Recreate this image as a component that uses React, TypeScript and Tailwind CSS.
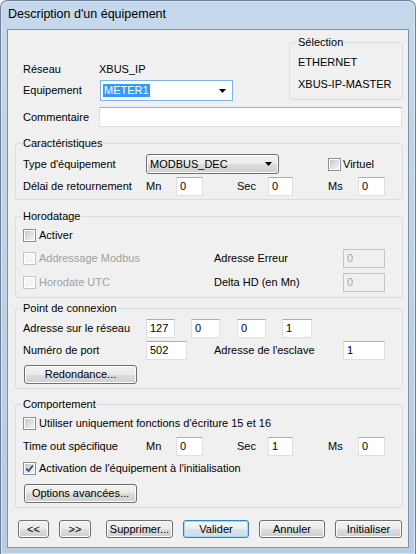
import React from 'react';

type Kids = { children?: React.ReactNode; className?: string };

const Check = ({ checked = false, disabled = false }: { checked?: boolean; disabled?: boolean }) => (
  <span
    className={`flex h-[13px] w-[13px] shrink-0 items-center justify-center border bg-white ${
      disabled ? 'border-[#c6c6c6]' : 'border-[#8e8f8f]'
    }`}
  >
    <span
      className={`flex h-[9px] w-[9px] items-center justify-center ${
        disabled ? 'bg-[#f4f4f4]' : 'bg-[linear-gradient(135deg,#c4c8ce,#f4f5f6)]'
      }`}
    >
      {checked && (
        <svg width="9" height="9" viewBox="0 0 9 9">
          <path d="M1.3 4.6 L3.6 7 L7.8 1.4" fill="none" stroke="#26449a" strokeWidth="1.7" />
        </svg>
      )}
    </span>
  </span>
);

const Field = ({ value = '', className = '', disabled = false }: { value?: string; className?: string; disabled?: boolean }) => (
  <div
    className={`flex h-[19px] shrink-0 items-center border pl-[3px] ${
      disabled ? 'border-[#c5c5c5] bg-[#f0f0f0] text-[#a3a3a3]' : 'border-[#dbdfe6] border-t-[#abadb3] bg-white'
    } ${className}`}
  >
    {value}
  </div>
);

const Btn = ({ children, className = '', focused = false }: Kids & { focused?: boolean }) => (
  <div
    className={`flex shrink-0 items-center justify-center rounded-[3px] border ${
      focused
        ? 'border-[#3c7fb1] bg-[linear-gradient(#f5f9fc_0%,#e9eef2_50%,#dde3e8_50%,#d3dbe1_100%)] shadow-[inset_0_0_0_1px_#9ed9f8]'
        : 'border-[#707070] bg-[linear-gradient(#f2f2f2_0%,#ebebeb_50%,#dddddd_50%,#cfcfcf_100%)] shadow-[inset_0_0_0_1px_#fcfcfc]'
    } ${className}`}
  >
    {children}
  </div>
);

const Arrow = () => (
  <svg width="7" height="4" viewBox="0 0 7 4" className="shrink-0">
    <path d="M0 0 H7 L3.5 4 Z" fill="#000" />
  </svg>
);

const Group = ({ title, children, className = '' }: Kids & { title: string }) => (
  <fieldset className={`rounded-[3px] border border-[#d5dfe5] px-[7px] ${className}`}>
    <legend className="-ml-[1px] px-[1px] leading-[13px]">{title}</legend>
    {children}
  </fieldset>
);

const TimeRow = ({ label, mn, sec, ms, className = '' }: { label: string; mn: string; sec: string; ms: string; className?: string }) => (
  <div className={`flex h-[19px] items-center ${className}`}>
    <span className="w-[123px] shrink-0">{label}</span>
    <span className="w-[30px] shrink-0">Mn</span>
    <Field value={mn} className="w-[27px]" />
    <span className="ml-[34px] w-[31px] shrink-0">Sec</span>
    <Field value={sec} className="w-[25px]" />
    <span className="ml-[35px] w-[30px] shrink-0">Ms</span>
    <Field value={ms} className="w-[27px]" />
  </div>
);

const CheckRow = ({ label, checked, disabled }: { label: string; checked?: boolean; disabled?: boolean }) => (
  <div className="flex items-center">
    <Check checked={checked} disabled={disabled} />
    <span className={`ml-[3px] whitespace-nowrap ${disabled ? 'text-[#a0a0a0]' : ''}`}>{label}</span>
  </div>
);

export default function App() {
  return (
    <div className="h-[554px] w-[419px] overflow-hidden bg-white font-['Liberation_Sans',Arial,sans-serif] text-[11px] leading-[13px] text-black">
      <div className="flex h-[554px] w-[416px] flex-col rounded-t-[7px] border border-b-0 border-[#6f8196] bg-[linear-gradient(#c6d8eb,#b8cce2)] shadow-[inset_0_0_0_1px_#d8e4f0]">
        {/* title bar */}
        <div className="flex h-[28px] shrink-0 items-center pb-[1px] pl-[7px] text-[12.5px] text-black">
          Description d'un équipement
        </div>

        {/* client area */}
        <div className="mx-[6px] flex h-[519px] shrink-0 flex-col border border-[#7f91a5] bg-[#f0f0f0]">
          {/* top */}
          <div className="mt-[6px] flex h-[65px] pl-[15px] pr-[5px]">
            <div className="flex flex-1 flex-col">
              <div className="mt-[26px] flex h-[14px] items-center">
                <span className="w-[76px]">Réseau</span>
                <span>XBUS_IP</span>
              </div>
              <div className="mt-[4px] flex h-[21px] items-center">
                <span className="w-[77px]">Equipement</span>
                <div className="flex h-[21px] w-[133px] items-center border border-[#7eb4ea] bg-white pl-[2px] pr-[6px]">
                  <span className="bg-[#3399ff] px-[1px] text-white">METER1</span>
                  <span className="flex-1" />
                  <Arrow />
                </div>
              </div>
            </div>
            <Group title="Sélection" className="h-[64px] w-[114px] pl-[8px]">
              <div className="mt-[7px] h-[14px]">ETHERNET</div>
              <div className="mt-[8px] h-[14px] whitespace-nowrap">XBUS-IP-MASTER</div>
            </Group>
          </div>

          {/* commentaire */}
          <div className="mt-[6px] flex h-[20px] items-center pl-[15px] pr-[6px]">
            <span className="w-[76px] shrink-0">Commentaire</span>
            <div className="h-[20px] flex-1 border border-[#dbdfe6] border-t-[#abadb3] bg-white" />
          </div>

          <div className="ml-[7px] mr-[5px] flex flex-col">
            <Group title="Caractéristiques" className="mt-[10px] pb-[3px]">
              <div className="mt-[4px] flex h-[20px] items-center">
                <span className="w-[123px] shrink-0">Type d'équipement</span>
                <Btn className="h-[20px] w-[133px] !justify-start pl-[3px] pr-[6px]">
                  <span>MODBUS_DEC</span>
                  <span className="flex-1" />
                  <Arrow />
                </Btn>
                <div className="ml-[49px] flex items-center">
                  <Check />
                  <span className="ml-[2px]">Virtuel</span>
                </div>
              </div>
              <TimeRow label="Délai de retournement" mn="0" sec="0" ms="0" className="mt-[3px]" />
            </Group>

            <Group title="Horodatage" className="mt-[10px] pb-[5px]">
              <div className="mt-[6px] flex h-[13px] items-center">
                <CheckRow label="Activer" />
              </div>
              <div className="mt-[7px] flex h-[19px] items-center">
                <div className="w-[191px] shrink-0">
                  <CheckRow label="Addressage Modbus" disabled />
                </div>
                <span className="w-[129px] shrink-0">Adresse Erreur</span>
                <Field value="0" disabled className="w-[42px]" />
              </div>
              <div className="mt-[5px] flex h-[19px] items-center">
                <div className="w-[191px] shrink-0">
                  <CheckRow label="Horodate UTC" disabled />
                </div>
                <span className="w-[129px] shrink-0">Delta HD (en Mn)</span>
                <Field value="0" disabled className="w-[42px]" />
              </div>
            </Group>

            <Group title="Point de connexion" className="mt-[4px] pb-[4px]">
              <div className="mt-[4px] flex h-[19px] items-center">
                <span className="w-[123px] shrink-0">Adresse sur le réseau</span>
                <Field value="127" className="w-[29px]" />
                <Field value="0" className="ml-[16px] w-[29px]" />
                <Field value="0" className="ml-[17px] w-[29px]" />
                <Field value="1" className="ml-[16px] w-[30px]" />
              </div>
              <div className="mt-[3px] flex h-[19px] items-center">
                <span className="w-[123px] shrink-0">Numéro de port</span>
                <Field value="502" className="w-[41px]" />
                <span className="ml-[27px] w-[129px] shrink-0">Adresse de l'esclave</span>
                <Field value="1" className="w-[42px]" />
              </div>
              <Btn className="ml-[1px] mt-[5px] h-[19px] w-[113px]">Redondance...</Btn>
            </Group>

            <Group title="Comportement" className="mt-[9px] pb-[4px]">
              <div className="mt-[6px] flex h-[13px] items-center">
                <CheckRow label="Utiliser uniquement fonctions d'écriture 15 et 16" />
              </div>
              <TimeRow label="Time out spécifique" mn="0" sec="1" ms="0" className="mt-[7px]" />
              <div className="mt-[6px] flex h-[13px] items-center">
                <CheckRow label="Activation de l'équipement à l'initialisation" checked />
              </div>
              <Btn className="ml-[1px] mt-[9px] h-[19px] w-[113px]">Options avancées...</Btn>
            </Group>
          </div>

          {/* bottom buttons */}
          <div className="mt-[12px] flex h-[18px] items-center pl-[10px]">
            <Btn className="h-[18px] w-[31px]">&lt;&lt;</Btn>
            <Btn className="ml-[10px] h-[18px] w-[32px]">&gt;&gt;</Btn>
            <Btn className="ml-[15px] h-[18px] w-[67px]">Supprimer...</Btn>
            <Btn focused className="ml-[10px] h-[18px] w-[66px]">Valider</Btn>
            <Btn className="ml-[10px] h-[18px] w-[66px]">Annuler</Btn>
            <Btn className="ml-[10px] h-[18px] w-[67px]">Initialiser</Btn>
          </div>
        </div>
      </div>
    </div>
  );
}
